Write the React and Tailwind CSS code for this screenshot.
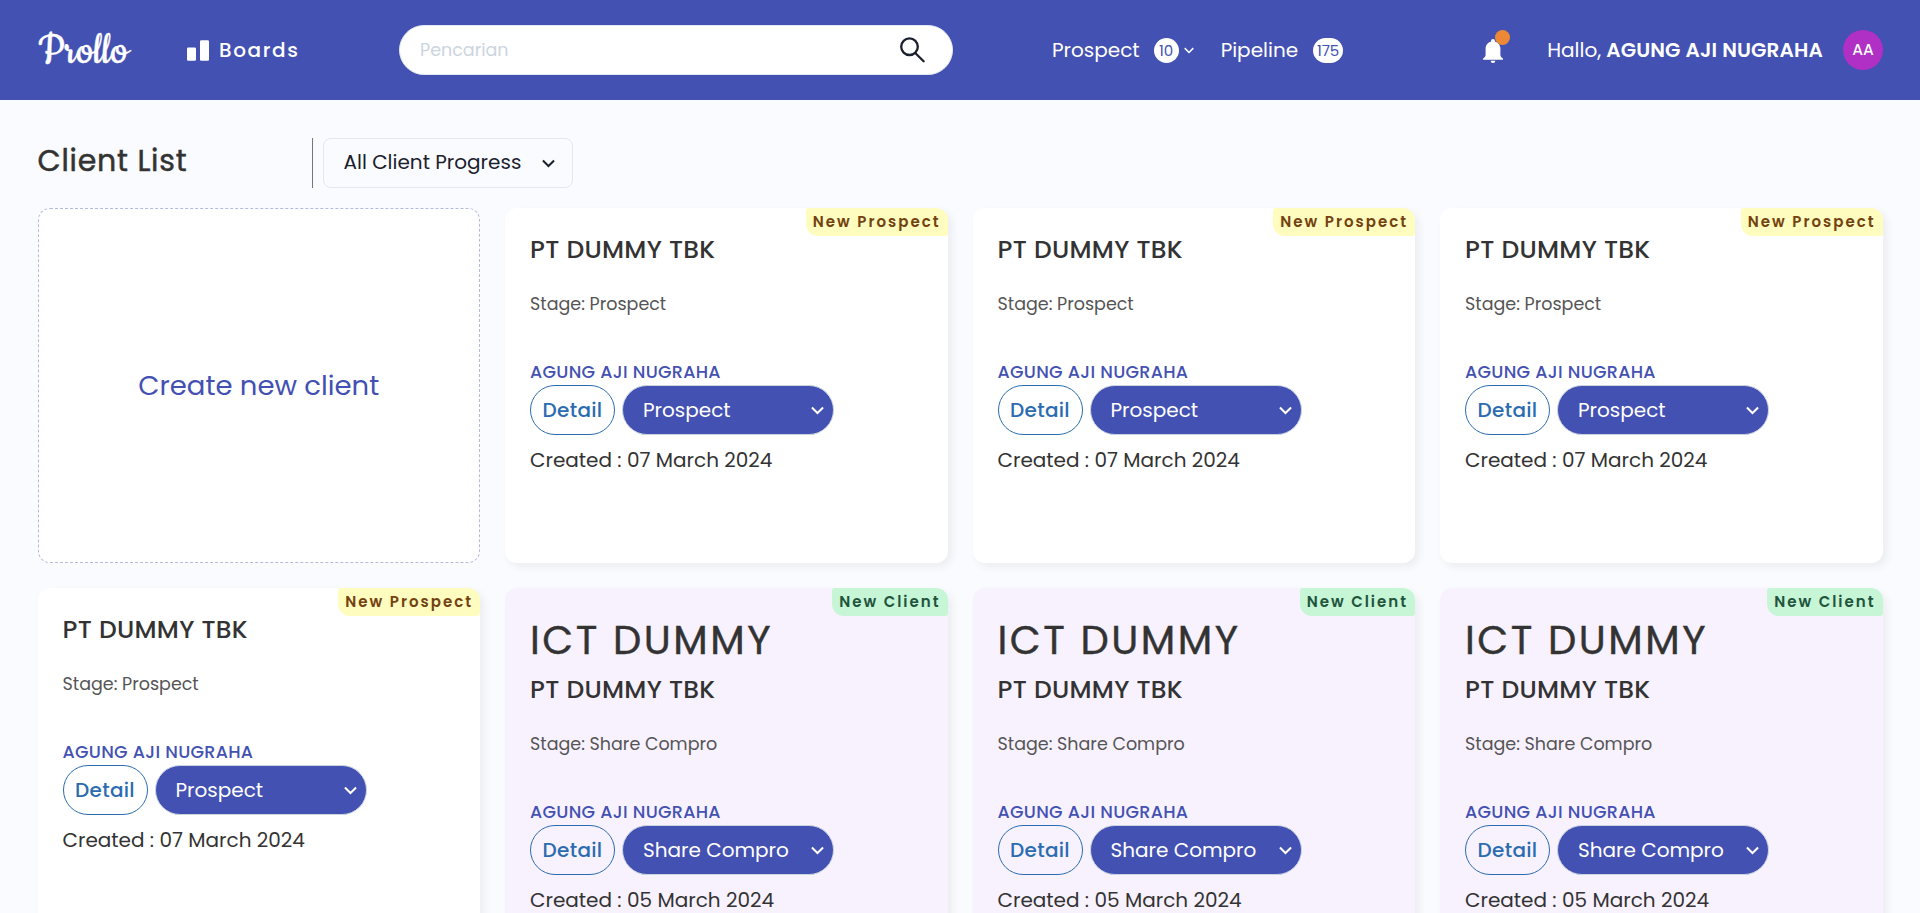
import React from "react";

function Chevron({ className }) {
  return (
    <svg viewBox="0 0 14 9" className={className} fill="none" stroke="currentColor" strokeWidth="2.1">
      <path d="M1 1.2 7 7.2 13 1.2" />
    </svg>
  );
}

function Header() {
  return (
    <header className="flex h-[100px] items-center bg-[#4351b2] text-xl text-white">
      <div className="w-[149px] shrink-0 pl-[38px] pt-[3px] font-['Cookie',cursive] text-[48px] leading-none [-webkit-text-stroke:0.3px]">Prollo</div>
      <nav className="flex w-[250px] items-center pl-[38px]">
        <svg viewBox="0 0 22 21" className="h-[21px] w-[22px]" fill="currentColor">
          <rect x="0" y="7.5" width="9" height="13.2" rx="1.2" />
          <rect x="13" y="0.3" width="9" height="20.4" rx="1.2" />
        </svg>
        <span className="ml-[10px] font-medium tracking-[1.6px]">Boards</span>
      </nav>
      <div className="flex h-[50px] w-[554px] items-center justify-between rounded-full border border-[#e2e8f0] bg-white pl-5 pr-[27px]">
        <span className="text-[17.5px] text-[#cbd5e0]">Pencarian</span>
        <svg viewBox="0 0 25 26" className="h-[26px] w-[25px]" fill="none" stroke="#1a202c" strokeWidth="2.3" strokeLinecap="round">
          <circle cx="9.5" cy="9.7" r="8.3" />
          <path d="M15.5 16.2 23.6 24.3" />
        </svg>
      </div>
      <div className="ml-[99px] flex items-center">
        <span>Prospect</span>
        <span className="ml-[14px] flex h-[25px] w-[25px] items-center justify-center rounded-full bg-white text-[15px] text-[#4351b2]">10</span>
        <Chevron className="ml-[5px] h-[7px] w-[10px]" />
        <span className="ml-[27px]">Pipeline</span>
        <span className="ml-[15px] flex h-[25px] w-[30px] items-center justify-center rounded-full bg-white text-[15px] text-[#4351b2]">175</span>
      </div>
      <div className="ml-auto flex items-center pr-[37px]">
        <div className="relative mr-[44px] h-[40px] w-[20px]">
          <svg viewBox="0 0 20 24" className="mt-[9px] h-6 w-5" fill="currentColor">
            <path d="M10 0c-1.1 0-1.9.8-1.9 1.8v.6C5 3.2 2.6 6 2.6 9.500v6.200c0 1.600-.9 2.800-2.600 3.800v1.300h20v-1.300c-1.700-1-2.600-2.200-2.600-3.800V9.500c0-3.500-2.400-6.300-5.500-7.100v-.6C11.900.8 11.100 0 10 0zM7.700 21.800a2.300 2.200 0 0 0 4.600 0z" />
          </svg>
          <span className="absolute -right-[7px] top-0 h-[15px] w-[15px] rounded-full bg-[#ed8936]" />
        </div>
        <span>Hallo,</span>
        <span className="ml-[5px] font-semibold tracking-[0.15px]">AGUNG AJI NUGRAHA</span>
        <span className="ml-5 flex h-10 w-10 items-center justify-center rounded-full bg-[#b02fc4] text-[15.5px] font-medium">AA</span>
      </div>
    </header>
  );
}

function Card({ client, stage, date }) {
  return (
    <article className={`relative h-[355px] rounded-xl px-[25px] pt-[25px] text-[#333] shadow-[4px_4px_8px_rgba(0,0,0,0.06)] ${client ? "bg-[#f8f2ff]" : "bg-white"}`}>
      <span className={`absolute right-0 top-0 rounded-bl-xl rounded-br-[3px] rounded-tl-[3px] rounded-tr-xl px-[7px] text-[15px] font-semibold leading-[28px] tracking-[2px] ${client ? "bg-[#c6f6d5] text-[#22543d]" : "bg-[#fefcbf] text-[#744210]"}`}>
        {client ? "New Client" : "New Prospect"}
      </span>
      {client && <h2 className="mb-[6px] text-[40px] leading-[54px] tracking-[2.5px] [-webkit-text-stroke:0.4px]">ICT DUMMY</h2>}
      <h3 className="text-[25px] font-medium leading-[33px] tracking-[0.3px]">PT DUMMY TBK</h3>
      <p className="mt-[25px] text-[17.5px] leading-[26px] text-[#555]">Stage: {stage}</p>
      <p className="mt-[42px] text-[17.5px] font-medium leading-[26px] tracking-[0.3px] text-[#4351b2]">AGUNG AJI NUGRAHA</p>
      <div className="flex gap-[7px] text-xl">
        <button className="h-[50px] w-[85px] rounded-full border border-[#2b6cb0] font-medium tracking-[0.3px] text-[#2b6cb0]">Detail</button>
        <div className="flex h-[50px] w-[212px] items-center justify-between rounded-full border border-[#cbd5e0] bg-[#4351b2] pl-[20px] pr-[9px] text-white">
          {stage}
          <Chevron className="h-[9px] w-[13px]" />
        </div>
      </div>
      <p className="mt-[10px] text-xl leading-[30px]">Created : {date}</p>
    </article>
  );
}

const cards = [
  ...Array(4).fill({ client: false, stage: "Prospect", date: "07 March 2024" }),
  ...Array(3).fill({ client: true, stage: "Share Compro", date: "05 March 2024" }),
];

export default function App() {
  return (
    <div className="h-[913px] overflow-hidden bg-[#fafbfe] font-['Poppins','Inter',sans-serif]">
      <Header />
      <main className="px-[37.5px] pt-[38px]">
        <div className="flex h-[50px] items-center">
          <h1 className="w-[274px] pb-[5px] text-[30px] tracking-[0.75px] text-[#333] [-webkit-text-stroke:0.5px]">Client List</h1>
          <div className="h-[50px] w-px bg-[#777]" />
          <div className="ml-[10px] flex h-[50px] w-[250px] items-center justify-between rounded-lg border border-[#e2e8f0] pl-5 pr-[17px] text-xl text-[#1a202c]">
            <span className="pb-[2px]">All Client Progress</span>
            <Chevron className="h-[9px] w-[13px]" />
          </div>
        </div>
        <div className="mt-5 grid grid-cols-4 gap-[25px]">
          <button className="h-[355px] rounded-xl border border-dashed border-[#b4b9e0] bg-white text-[27.5px] text-[#4351b2]">
            Create new client
          </button>
          {cards.map((card, i) => (
            <Card key={i} {...card} />
          ))}
        </div>
      </main>
    </div>
  );
}
